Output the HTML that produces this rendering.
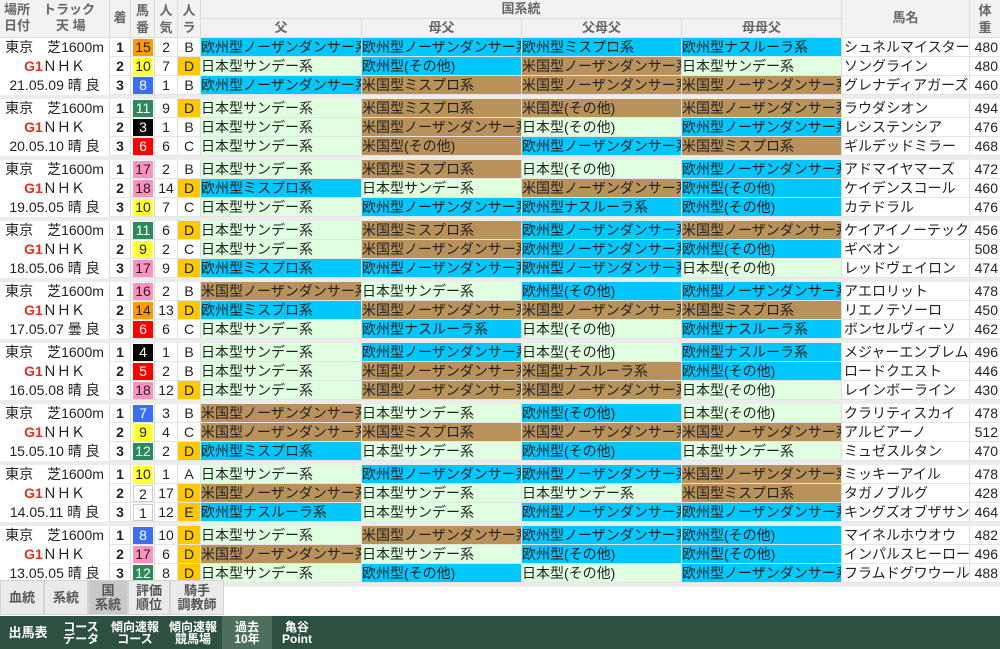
<!DOCTYPE html>
<html><head><meta charset="utf-8"><style>
*{box-sizing:border-box;margin:0;padding:0}
body{width:1000px;height:649px;overflow:hidden;background:#fff;font-family:"Liberation Sans","Noto Sans CJK JP",sans-serif;color:#222;position:relative}
.hd{position:absolute;top:0;left:0;width:1000px;height:38px;background:#f2f2f2;border-bottom:1px solid #ddd;color:#666;font-weight:bold;font-size:13px}
.hd div{position:absolute;text-align:center;border-right:1px solid #ddd;line-height:17px}
.body{position:absolute;top:38px;left:0;width:1000px;background:#ececec}
.g{position:relative;height:57px;margin-bottom:4px;background:#fff}
.pl{position:absolute;left:0;top:0;width:110px;height:57px;border-right:1px solid #ddd;text-align:center;font-size:14px;line-height:19px;padding-top:0}
.pl b{color:#e0301e;font-weight:bold}
.r{position:absolute;left:110px;height:19px;width:890px;border-bottom:1px solid #e4e4e4;font-size:14px;line-height:18px}
.r div{position:absolute;top:0;height:18px;border-right:1px solid #ddd;white-space:nowrap;overflow:hidden}
.c1{left:0;width:21px;text-align:center;font-weight:bold}
.c2{left:21px;width:24px}
.c2 span{position:absolute;left:2px;top:1px;width:20px;height:17px;line-height:17px;text-align:center;color:#fff;font-size:14px}
.c3{left:45px;width:23px;text-align:center}
.c4{left:68px;width:23px;text-align:center}
.f1{left:91px;width:161px}.f2{left:252px;width:160px}.f3{left:412px;width:160px}.f4{left:572px;width:160px}
.nm{left:732px;width:128px;padding-left:2px}
.wt{left:860px;width:30px;text-align:right;padding-right:2px;border-right:none!important}
.e{background:#00c8ff}.j{background:#e0ffe0}.a{background:#b8925a}
.D{background:#ffc800}
.w1 span{background:#fff;color:#222!important;border:1px solid #ccc}
.w2 span{background:#000}.w3 span{background:#f00}.w4 span{background:#3b6ff0}
.w5 span{background:#ffff33;color:#222!important}.w6 span{background:#2a8a5a}
.w7 span{background:#ff9a00;color:#222!important}.w8 span{background:#ff90c0;color:#222!important}
.tabs{position:absolute;top:580px;left:0;height:35px;width:224px}
.tab{position:absolute;top:0;height:35px;background:#eaeaea;border:1px solid #d4d4d4;color:#555;font-weight:bold;font-size:13px;text-align:center;line-height:14px;display:flex;align-items:center;justify-content:center}
.nav{position:absolute;top:616px;left:0;width:1000px;height:33px;background:#2e5041;color:#fff;font-weight:bold;font-size:12px}
.nav div{position:absolute;top:0;height:33px;display:flex;align-items:center;justify-content:center;text-align:center;line-height:12px}
</style></head><body>
<div class="hd">
<div style="left:0;width:110px;height:38px;text-align:left;padding:2px 4px;line-height:16px">場所　トラック<br>日付　　天 場</div>
<div style="left:110px;width:21px;height:38px;line-height:36px">着</div>
<div style="left:131px;width:24px;height:38px;padding-top:2px">馬<br>番</div>
<div style="left:155px;width:23px;height:38px;padding-top:2px">人<br>気</div>
<div style="left:178px;width:23px;height:38px;padding-top:2px">人<br>ラ</div>
<div style="left:201px;width:641px;height:19px;border-bottom:1px solid #ddd">国系統</div>
<div style="left:201px;top:19px;width:161px;height:19px">父</div>
<div style="left:362px;top:19px;width:160px;height:19px">母父</div>
<div style="left:522px;top:19px;width:160px;height:19px">父母父</div>
<div style="left:682px;top:19px;width:160px;height:19px">母母父</div>
<div style="left:842px;width:128px;height:38px;line-height:36px">馬名</div>
<div style="left:970px;width:30px;height:38px;padding-top:2px;border-right:none">体<br>重</div>
</div>
<div class="body">

<div class="g"><div class="pl">東京　芝1600m<br><b>G1</b>ＮＨＫ<br>21.05.09 晴 良</div>
<div class="r" style="top:0"><div class="c1">1</div><div class="c2 w7"><span>15</span></div><div class="c3">2</div><div class="c4">B</div><div class="f1 e">欧州型ノーザンダンサー系</div><div class="f2 e">欧州型ノーザンダンサー系</div><div class="f3 e">欧州型ミスプロ系</div><div class="f4 e">欧州型ナスルーラ系</div><div class="nm">シュネルマイスター</div><div class="wt">480</div></div>
<div class="r" style="top:19px"><div class="c1">2</div><div class="c2 w5"><span>10</span></div><div class="c3">7</div><div class="c4 D">D</div><div class="f1 j">日本型サンデー系</div><div class="f2 e">欧州型(その他)</div><div class="f3 a">米国型ノーザンダンサー系</div><div class="f4 j">日本型サンデー系</div><div class="nm">ソングライン</div><div class="wt">480</div></div>
<div class="r" style="top:38px"><div class="c1">3</div><div class="c2 w4"><span>8</span></div><div class="c3">1</div><div class="c4">B</div><div class="f1 e">欧州型ノーザンダンサー系</div><div class="f2 a">米国型ミスプロ系</div><div class="f3 a">米国型ノーザンダンサー系</div><div class="f4 a">米国型ノーザンダンサー系</div><div class="nm">グレナディアガーズ</div><div class="wt">460</div></div></div>

<div class="g"><div class="pl">東京　芝1600m<br><b>G1</b>ＮＨＫ<br>20.05.10 晴 良</div>
<div class="r" style="top:0"><div class="c1">1</div><div class="c2 w6"><span>11</span></div><div class="c3">9</div><div class="c4 D">D</div><div class="f1 j">日本型サンデー系</div><div class="f2 a">米国型ミスプロ系</div><div class="f3 a">米国型(その他)</div><div class="f4 a">米国型ノーザンダンサー系</div><div class="nm">ラウダシオン</div><div class="wt">494</div></div>
<div class="r" style="top:19px"><div class="c1">2</div><div class="c2 w2"><span>3</span></div><div class="c3">1</div><div class="c4">B</div><div class="f1 j">日本型サンデー系</div><div class="f2 a">米国型ノーザンダンサー系</div><div class="f3 j">日本型(その他)</div><div class="f4 e">欧州型ノーザンダンサー系</div><div class="nm">レシステンシア</div><div class="wt">476</div></div>
<div class="r" style="top:38px"><div class="c1">3</div><div class="c2 w3"><span>6</span></div><div class="c3">6</div><div class="c4">C</div><div class="f1 j">日本型サンデー系</div><div class="f2 a">米国型(その他)</div><div class="f3 e">欧州型ノーザンダンサー系</div><div class="f4 a">米国型ミスプロ系</div><div class="nm">ギルデッドミラー</div><div class="wt">468</div></div></div>

<div class="g"><div class="pl">東京　芝1600m<br><b>G1</b>ＮＨＫ<br>19.05.05 晴 良</div>
<div class="r" style="top:0"><div class="c1">1</div><div class="c2 w8"><span>17</span></div><div class="c3">2</div><div class="c4">B</div><div class="f1 j">日本型サンデー系</div><div class="f2 a">米国型ミスプロ系</div><div class="f3 j">日本型(その他)</div><div class="f4 e">欧州型ノーザンダンサー系</div><div class="nm">アドマイヤマーズ</div><div class="wt">472</div></div>
<div class="r" style="top:19px"><div class="c1">2</div><div class="c2 w8"><span>18</span></div><div class="c3">14</div><div class="c4 D">D</div><div class="f1 e">欧州型ミスプロ系</div><div class="f2 j">日本型サンデー系</div><div class="f3 a">米国型ノーザンダンサー系</div><div class="f4 e">欧州型(その他)</div><div class="nm">ケイデンスコール</div><div class="wt">460</div></div>
<div class="r" style="top:38px"><div class="c1">3</div><div class="c2 w5"><span>10</span></div><div class="c3">7</div><div class="c4">C</div><div class="f1 j">日本型サンデー系</div><div class="f2 e">欧州型ノーザンダンサー系</div><div class="f3 e">欧州型ナスルーラ系</div><div class="f4 e">欧州型(その他)</div><div class="nm">カテドラル</div><div class="wt">476</div></div></div>

<div class="g"><div class="pl">東京　芝1600m<br><b>G1</b>ＮＨＫ<br>18.05.06 晴 良</div>
<div class="r" style="top:0"><div class="c1">1</div><div class="c2 w6"><span>11</span></div><div class="c3">6</div><div class="c4 D">D</div><div class="f1 j">日本型サンデー系</div><div class="f2 a">米国型ミスプロ系</div><div class="f3 e">欧州型ノーザンダンサー系</div><div class="f4 a">米国型ノーザンダンサー系</div><div class="nm">ケイアイノーテック</div><div class="wt">456</div></div>
<div class="r" style="top:19px"><div class="c1">2</div><div class="c2 w5"><span>9</span></div><div class="c3">2</div><div class="c4">C</div><div class="f1 j">日本型サンデー系</div><div class="f2 a">米国型ノーザンダンサー系</div><div class="f3 e">欧州型ノーザンダンサー系</div><div class="f4 e">欧州型(その他)</div><div class="nm">ギベオン</div><div class="wt">508</div></div>
<div class="r" style="top:38px"><div class="c1">3</div><div class="c2 w8"><span>17</span></div><div class="c3">9</div><div class="c4 D">D</div><div class="f1 e">欧州型ミスプロ系</div><div class="f2 e">欧州型ノーザンダンサー系</div><div class="f3 e">欧州型ノーザンダンサー系</div><div class="f4 j">日本型(その他)</div><div class="nm">レッドヴェイロン</div><div class="wt">474</div></div></div>

<div class="g"><div class="pl">東京　芝1600m<br><b>G1</b>ＮＨＫ<br>17.05.07 曇 良</div>
<div class="r" style="top:0"><div class="c1">1</div><div class="c2 w8"><span>16</span></div><div class="c3">2</div><div class="c4">B</div><div class="f1 a">米国型ノーザンダンサー系</div><div class="f2 j">日本型サンデー系</div><div class="f3 e">欧州型(その他)</div><div class="f4 e">欧州型ノーザンダンサー系</div><div class="nm">アエロリット</div><div class="wt">478</div></div>
<div class="r" style="top:19px"><div class="c1">2</div><div class="c2 w7"><span>14</span></div><div class="c3">13</div><div class="c4 D">D</div><div class="f1 e">欧州型ミスプロ系</div><div class="f2 a">米国型ノーザンダンサー系</div><div class="f3 a">米国型ノーザンダンサー系</div><div class="f4 a">米国型ミスプロ系</div><div class="nm">リエノテソーロ</div><div class="wt">450</div></div>
<div class="r" style="top:38px"><div class="c1">3</div><div class="c2 w3"><span>6</span></div><div class="c3">6</div><div class="c4">C</div><div class="f1 j">日本型サンデー系</div><div class="f2 e">欧州型ナスルーラ系</div><div class="f3 j">日本型(その他)</div><div class="f4 e">欧州型ナスルーラ系</div><div class="nm">ボンセルヴィーソ</div><div class="wt">462</div></div></div>

<div class="g"><div class="pl">東京　芝1600m<br><b>G1</b>ＮＨＫ<br>16.05.08 晴 良</div>
<div class="r" style="top:0"><div class="c1">1</div><div class="c2 w2"><span>4</span></div><div class="c3">1</div><div class="c4">B</div><div class="f1 j">日本型サンデー系</div><div class="f2 e">欧州型ノーザンダンサー系</div><div class="f3 j">日本型(その他)</div><div class="f4 e">欧州型ナスルーラ系</div><div class="nm">メジャーエンブレム</div><div class="wt">496</div></div>
<div class="r" style="top:19px"><div class="c1">2</div><div class="c2 w3"><span>5</span></div><div class="c3">2</div><div class="c4">B</div><div class="f1 j">日本型サンデー系</div><div class="f2 a">米国型ノーザンダンサー系</div><div class="f3 a">米国型ナスルーラ系</div><div class="f4 e">欧州型(その他)</div><div class="nm">ロードクエスト</div><div class="wt">446</div></div>
<div class="r" style="top:38px"><div class="c1">3</div><div class="c2 w8"><span>18</span></div><div class="c3">12</div><div class="c4 D">D</div><div class="f1 j">日本型サンデー系</div><div class="f2 a">米国型ノーザンダンサー系</div><div class="f3 a">米国型ノーザンダンサー系</div><div class="f4 j">日本型(その他)</div><div class="nm">レインボーライン</div><div class="wt">430</div></div></div>

<div class="g"><div class="pl">東京　芝1600m<br><b>G1</b>ＮＨＫ<br>15.05.10 晴 良</div>
<div class="r" style="top:0"><div class="c1">1</div><div class="c2 w4"><span>7</span></div><div class="c3">3</div><div class="c4">B</div><div class="f1 a">米国型ノーザンダンサー系</div><div class="f2 j">日本型サンデー系</div><div class="f3 e">欧州型(その他)</div><div class="f4 j">日本型(その他)</div><div class="nm">クラリティスカイ</div><div class="wt">478</div></div>
<div class="r" style="top:19px"><div class="c1">2</div><div class="c2 w5"><span>9</span></div><div class="c3">4</div><div class="c4">C</div><div class="f1 a">米国型ノーザンダンサー系</div><div class="f2 a">米国型ミスプロ系</div><div class="f3 a">米国型ノーザンダンサー系</div><div class="f4 a">米国型ノーザンダンサー系</div><div class="nm">アルビアーノ</div><div class="wt">512</div></div>
<div class="r" style="top:38px"><div class="c1">3</div><div class="c2 w6"><span>12</span></div><div class="c3">2</div><div class="c4 D">D</div><div class="f1 e">欧州型ミスプロ系</div><div class="f2 j">日本型サンデー系</div><div class="f3 e">欧州型(その他)</div><div class="f4 j">日本型サンデー系</div><div class="nm">ミュゼスルタン</div><div class="wt">470</div></div></div>

<div class="g"><div class="pl">東京　芝1600m<br><b>G1</b>ＮＨＫ<br>14.05.11 晴 良</div>
<div class="r" style="top:0"><div class="c1">1</div><div class="c2 w5"><span>10</span></div><div class="c3">1</div><div class="c4">A</div><div class="f1 j">日本型サンデー系</div><div class="f2 e">欧州型ノーザンダンサー系</div><div class="f3 e">欧州型ノーザンダンサー系</div><div class="f4 a">米国型ノーザンダンサー系</div><div class="nm">ミッキーアイル</div><div class="wt">478</div></div>
<div class="r" style="top:19px"><div class="c1">2</div><div class="c2 w1"><span>2</span></div><div class="c3">17</div><div class="c4 D">D</div><div class="f1 a">米国型ノーザンダンサー系</div><div class="f2 j">日本型サンデー系</div><div class="f3 j">日本型サンデー系</div><div class="f4 a">米国型ミスプロ系</div><div class="nm">タガノブルグ</div><div class="wt">428</div></div>
<div class="r" style="top:38px"><div class="c1">3</div><div class="c2 w1"><span>1</span></div><div class="c3">12</div><div class="c4 D">E</div><div class="f1 e">欧州型ナスルーラ系</div><div class="f2 j">日本型サンデー系</div><div class="f3 e">欧州型ノーザンダンサー系</div><div class="f4 e">欧州型ノーザンダンサー系</div><div class="nm">キングズオブザサン</div><div class="wt">464</div></div></div>

<div class="g"><div class="pl">東京　芝1600m<br><b>G1</b>ＮＨＫ<br>13.05.05 晴 良</div>
<div class="r" style="top:0"><div class="c1">1</div><div class="c2 w4"><span>8</span></div><div class="c3">10</div><div class="c4 D">D</div><div class="f1 j">日本型サンデー系</div><div class="f2 a">米国型ノーザンダンサー系</div><div class="f3 e">欧州型ノーザンダンサー系</div><div class="f4 e">欧州型(その他)</div><div class="nm">マイネルホウオウ</div><div class="wt">482</div></div>
<div class="r" style="top:19px"><div class="c1">2</div><div class="c2 w8"><span>17</span></div><div class="c3">6</div><div class="c4 D">D</div><div class="f1 a">米国型ノーザンダンサー系</div><div class="f2 j">日本型サンデー系</div><div class="f3 e">欧州型(その他)</div><div class="f4 e">欧州型(その他)</div><div class="nm">インパルスヒーロー</div><div class="wt">496</div></div>
<div class="r" style="top:38px"><div class="c1">3</div><div class="c2 w6"><span>12</span></div><div class="c3">8</div><div class="c4 D">D</div><div class="f1 j">日本型サンデー系</div><div class="f2 e">欧州型(その他)</div><div class="f3 j">日本型(その他)</div><div class="f4 e">欧州型ノーザンダンサー系</div><div class="nm">フラムドグワウール</div><div class="wt">488</div></div></div>
</div>

<div class="tabs">
<div class="tab" style="left:0;width:44px">血統</div>
<div class="tab" style="left:44px;width:44px">系統</div>
<div class="tab" style="left:88px;width:40px;background:#c8c8c8">国<br>系統</div>
<div class="tab" style="left:128px;width:42px">評価<br>順位</div>
<div class="tab" style="left:170px;width:54px">騎手<br>調教師</div>
</div>
<div class="nav">
<div style="left:0;width:56px;font-size:13px">出馬表</div>
<div style="left:56px;width:50px">コース<br>データ</div>
<div style="left:106px;width:58px">傾向速報<br>コース</div>
<div style="left:164px;width:58px">傾向速報<br>競馬場</div>
<div style="left:222px;width:50px;background:#4e6e5e">過去<br>10年</div>
<div style="left:272px;width:50px">亀谷<br>Point</div>
</div>
</body></html>
